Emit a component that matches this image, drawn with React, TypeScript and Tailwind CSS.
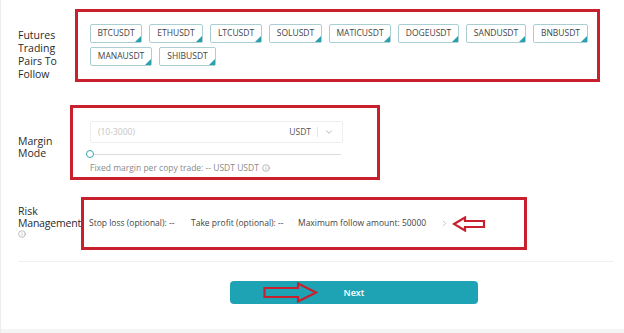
import { ChevronDown, ChevronRight, Info } from "lucide-react";

const pairs: { name: string; w: number }[] = [
  { name: "BTCUSDT", w: 52 },
  { name: "ETHUSDT", w: 54 },
  { name: "LTCUSDT", w: 52 },
  { name: "SOLUSDT", w: 53 },
  { name: "MATICUSDT", w: 62 },
  { name: "DOGEUSDT", w: 61 },
  { name: "SANDUSDT", w: 60 },
  { name: "BNBUSDT", w: 55 },
  { name: "MANAUSDT", w: 62 },
  { name: "SHIBUSDT", w: 57 },
];

function Chip({ name, w }: { name: string; w: number }) {
  return (
    <div
      className="relative flex h-[19px] items-center justify-center rounded-[2px] border border-[#a9cfd3] text-[8.5px] text-[#444]"
      style={{ width: w }}
    >
      {name}
      <span className="absolute bottom-0 right-0 h-0 w-0 border-b-[6px] border-l-[6px] border-b-[#2a9fb0] border-l-transparent" />
    </div>
  );
}

function LeftArrow() {
  return (
    <svg width="34" height="16" viewBox="0 0 34 16" className="shrink-0">
      <path d="M2 8 L13 1.5 L13 5 L32 5 L32 11 L13 11 L13 14.5 Z" fill="none" stroke="#c9202e" strokeWidth="2.2" strokeLinejoin="miter" />
    </svg>
  );
}

function RightArrow() {
  return (
    <svg width="55" height="21" viewBox="0 0 55 21">
      <path d="M1.5 6 L35 6 L35 1.5 L53 10.5 L35 19.5 L35 15 L1.5 15 Z" fill="none" stroke="#c9202e" strokeWidth="2.2" />
    </svg>
  );
}

export default function App() {
  return (
    <div className="relative h-[333px] w-[624px] overflow-hidden border-l border-[#ececec] bg-white font-['Open_Sans',sans-serif] text-[#333]">
      {/* futures pairs */}
      <div className="flex pt-[9px]">
        <div className="ml-[17px] w-[57px] pt-[20px] text-[10.5px] font-medium leading-[13px] text-[#2a2a2a]">
          Futures
          <br />
          Trading
          <br />
          Pairs To
          <br />
          Follow
        </div>
        <div className="h-[73px] w-[525px] border-[3px] border-[#c9202e] pl-[12px] pt-[12px]">
          <div className="flex flex-wrap gap-x-[7px] gap-y-[4px]">
            {pairs.map((p) => (
              <Chip key={p.name} name={p.name} w={p.w} />
            ))}
          </div>
        </div>
      </div>

      {/* margin mode */}
      <div className="mt-[23px] flex">
        <div className="ml-[17px] w-[52px] pt-[30px] text-[10.5px] font-medium leading-[12px] text-[#2a2a2a]">
          Margin
          <br />
          Mode
        </div>
        <div className="h-[75px] w-[310px] border-[3px] border-[#c9202e] pl-[17px] pt-[13px]">
          <div className="flex h-[22px] w-[253px] items-center rounded-[2px] border border-[#eeeeee] pl-[7px] pr-[8px] text-[8.5px]">
            <span className="flex-1 text-[#c4c4c4]">(10-3000)</span>
            <span className="text-[#555]">USDT</span>
            <span className="mx-[6px] h-[10px] w-px bg-[#e6e6e6]" />
            <ChevronDown size={10} className="text-[#888]" strokeWidth={1.5} />
          </div>
          <div className="mt-[7px] flex h-[8px] w-[255px] -translate-x-[4px] items-center">
            <span className="h-[8px] w-[8px] rounded-full border-[1.5px] border-[#3aa3b0] bg-white" />
            <span className="h-px flex-1 bg-[#dcdcdc]" />
          </div>
          <div className="mt-[4px] flex items-center gap-[3px] text-[8.5px] text-[#8a8a8a]">
            Fixed margin per copy trade: -- USDT USDT
            <Info size={8} strokeWidth={1.8} />
          </div>
        </div>
      </div>

      {/* risk management */}
      <div className="mt-[17px] flex">
        <div className="ml-[17px] w-[63px] pt-[8px] text-[10.5px] font-medium leading-[12px] text-[#2a2a2a]">
          Risk
          <br />
          <span className="tracking-[-0.2px]">Management</span>
          <Info size={8} strokeWidth={1.6} className="mt-[1px] text-[#888]" />
        </div>
        <div className="flex h-[53px] w-[446px] items-center border-[3px] border-[#c9202e] pl-[5px] text-[8.5px] text-[#444]">
          <span className="w-[102px]">Stop loss (optional): --</span>
          <span className="w-[107px]">Take profit (optional): --</span>
          <span>Maximum follow amount: 50000</span>
          <ChevronRight size={9} strokeWidth={1.5} className="ml-[14px] text-[#999]" />
          <span className="ml-[3px]">
            <LeftArrow />
          </span>
        </div>
      </div>

      <div className="ml-[17px] mt-[11px] h-px w-[596px] bg-[#f0f0f0]" />

      {/* next */}
      <div className="relative ml-[229px] mt-[19px] flex h-[23px] w-[248px] items-center justify-center rounded-[4px] bg-[#1ea3b5] text-[9px] font-semibold text-white">
        Next
        <span className="absolute left-[33px] top-[1px]">
          <RightArrow />
        </span>
      </div>

      <div className="absolute bottom-0 left-0 h-[4px] w-full bg-[#f4f4f4]" />
    </div>
  );
}
